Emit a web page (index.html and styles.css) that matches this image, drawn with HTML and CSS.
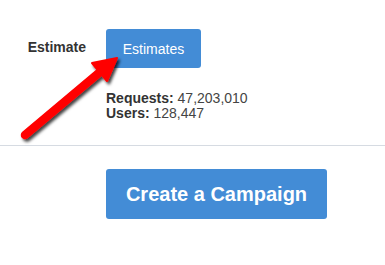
FILE: index.html
```html
<!DOCTYPE html>
<html>
<head>
<meta charset="utf-8">
<link rel="stylesheet" href="styles.css">
</head>
<body>
<div class="page">
  <div class="row">
    <div class="label">Estimate</div>
    <div class="field">
      <button class="btn btn-est">Estimates</button>
      <div class="stats">
        <div><b>Requests:</b> 47,203,010</div>
        <div><b>Users:</b> 128,447</div>
      </div>
    </div>
  </div>
  <hr class="divider">
  <div class="actions">
    <button class="btn btn-create">Create a Campaign</button>
  </div>
  <svg class="arrow" width="140" height="100" viewBox="0 0 140 100">
    <defs>
      <filter id="sh" x="-20%" y="-20%" width="150%" height="150%">
        <feDropShadow dx="2" dy="2.5" stdDeviation="1.4" flood-color="#000" flood-opacity="0.75"/>
      </filter>
    </defs>
    <g filter="url(#sh)">
      <line x1="25" y1="85" x2="100" y2="22" stroke="#f00" stroke-width="8.5" stroke-linecap="round"/>
      <polygon points="117,8 92,13 107,31" fill="#f00" stroke="#f00" stroke-width="2" stroke-linejoin="round"/>
    </g>
  </svg>
</div>
</body>
</html>
```
FILE: styles.css
```css
html, body {
  margin: 0;
  padding: 0;
  background: #fff;
}
body {
  font-family: "Liberation Sans", Arial, sans-serif;
  color: #333;
}
.page {
  position: relative;
  width: 385px;
  height: 265px;
  padding-top: 29px;
  box-sizing: border-box;
}
.row {
  display: flex;
}
.label {
  width: 86px;
  text-align: right;
  padding-top: 10px;
  margin-right: 20px;
  font-weight: bold;
  font-size: 14px;
  line-height: 16px;
  color: #333;
}
.field {
  display: flex;
  flex-direction: column;
  align-items: flex-start;
}
.btn {
  border: none;
  background: #438cd6;
  color: #fff;
  font-family: "Liberation Sans", Arial, sans-serif;
  border-radius: 3px;
  margin: 0;
  cursor: pointer;
}
.btn-est {
  width: 95px;
  height: 39px;
  font-size: 14px;
  padding: 0;
}
.stats {
  margin-top: 23px;
  font-size: 14px;
  line-height: 15px;
  color: #444;
}
.stats b {
  color: #333;
}
.divider {
  border: none;
  border-top: 1px solid #d6dbe2;
  margin: 24px 0 0 0;
}
.actions {
  padding: 23px 0 0 106px;
}
.btn-create {
  width: 221px;
  height: 50px;
  font-size: 20px;
  font-weight: bold;
  padding: 0;
}
.arrow {
  position: absolute;
  left: 0;
  top: 50px;
}
```
